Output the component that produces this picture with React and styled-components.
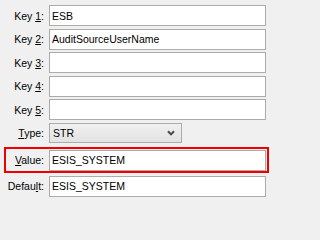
import React from "react";
import styled, { createGlobalStyle } from "styled-components";

const Global = createGlobalStyle`
  html, body { margin: 0; padding: 0; background: #f0f0f0; }
  body { width: 271px; height: 202px; overflow: hidden; }
  * { box-sizing: border-box; }
`;

const Form = styled.div`
  display: flex;
  flex-direction: column;
  padding-top: 5px;
  font-family: "Liberation Sans", Arial, sans-serif;
  font-size: 10.5px;
  color: #000;
`;

const Row = styled.div`
  display: grid;
  grid-template-columns: ${(p) => (p.$inBox ? "38px" : "40px")} 217px;
  column-gap: 5px;
  align-items: center;
  height: ${(p) => p.$h || 21}px;
  margin-left: ${(p) => (p.$inBox ? 0 : 4)}px;
  margin-bottom: ${(p) => (p.$mb !== undefined ? p.$mb : 2.6)}px;
`;

const Label = styled.label`
  text-align: right;
  white-space: nowrap;
  u { text-decoration: underline; text-underline-offset: 1px; }
`;

const Field = styled.input`
  height: 100%;
  width: 100%;
  margin: 0;
  border: 1px solid #ababab;
  background: #fff;
  padding: 0 0 0 2px;
  font: inherit;
  color: #000;
  outline: none;
`;

const Combo = styled.div`
  height: 100%;
  width: 133px;
  border: 1px solid #acacac;
  background: linear-gradient(#f0f0f0, #e3e3e3);
  display: flex;
  align-items: center;
  justify-content: space-between;
  padding: 0 6px 0 3px;
`;

const Highlight = styled.div`
  margin-left: 4px;
  width: 265px;
  border: 2px solid #ee0000;
  padding: 1px 1px 0.5px 0;
  margin-bottom: 2.5px;
`;

const Chevron = () => (
  <svg width="8" height="6" viewBox="0 0 8 6">
    <path d="M1 1.2 L4 4.4 L7 1.2" fill="none" stroke="#4a4a4a" strokeWidth="2" />
  </svg>
);

const keys = [
  { n: "1", v: "ESB" },
  { n: "2", v: "AuditSourceUserName" },
  { n: "3", v: "" },
  { n: "4", v: "" },
  { n: "5", v: "" },
];

export default function App() {
  return (
    <>
      <Global />
      <Form>
        {keys.map((k) => (
          <Row key={k.n}>
            <Label>
              Key <u>{k.n}</u>:
            </Label>
            <Field readOnly value={k.v} />
          </Row>
        ))}
        <Row $h={20} $mb={4}>
          <Label>
            <u>T</u>ype:
          </Label>
          <Combo>
            <span>STR</span>
            <Chevron />
          </Combo>
        </Row>
        <Highlight>
          <Row $inBox $mb={0}>
            <Label>
              <u>V</u>alue:
            </Label>
            <Field readOnly value="ESIS_SYSTEM" />
          </Row>
        </Highlight>
        <Row>
          <Label>
            Defau<u>l</u>t:
          </Label>
          <Field readOnly value="ESIS_SYSTEM" />
        </Row>
      </Form>
    </>
  );
}
